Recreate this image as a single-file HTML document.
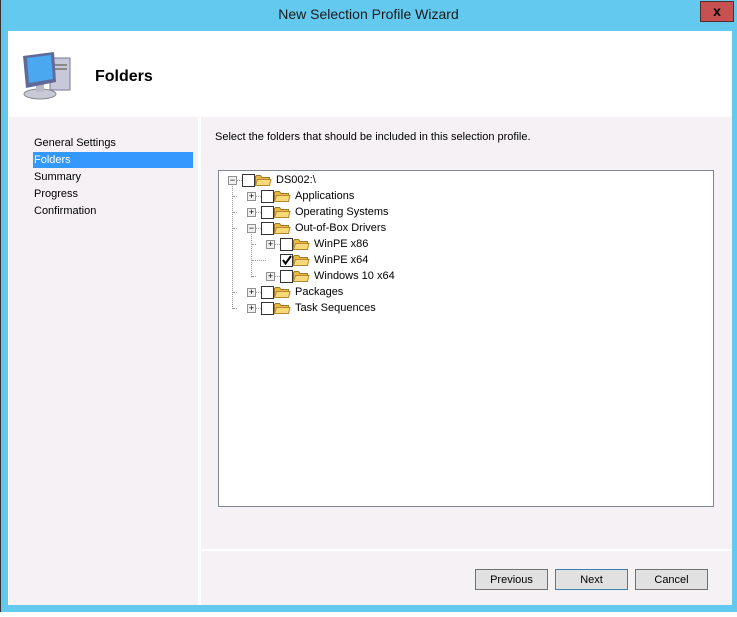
<!DOCTYPE html>
<html><head><style>
*{margin:0;padding:0;box-sizing:border-box}
body{width:737px;height:617px;background:#fff;position:relative;overflow:hidden;font-family:"Liberation Sans",sans-serif;font-size:11px;color:#000}
.a{position:absolute}
.frame{left:0;top:0;width:737px;height:612px;background:#63c9ef;border-left:1px solid #333}
.t{left:0;top:6px;width:737px;text-align:center;font-size:14px;color:#1a1a1a}
.close{left:700px;top:1px;width:34px;height:21px;background:#c75050;border:1px solid #5a2a2a;color:#000;font-weight:bold;font-size:14px;text-align:center;line-height:18px}
.client{left:8px;top:31px;width:724px;height:574px;background:#fff}
.left{left:9px;top:117px;width:189px;height:488px;background:#f5f1f5}
.right{left:201px;top:117px;width:531px;height:432px;background:#f5f1f5}
.bot{left:201px;top:551px;width:531px;height:54px;background:#f5f1f5}
.nav{left:34px;font-size:11px}
.sel{left:33px;top:152px;width:160px;height:16px;background:#3399ff}
.tree{left:218px;top:170px;width:496px;height:337px;background:#fff;border:1px solid #828790}
.btn{top:569px;width:73px;height:21px;background:#e1e1e1;border:1px solid #707070;text-align:center;line-height:20px;font-size:11px}
.ex{width:9px;height:9px;border:1px solid #919191;background:#f0f0f0;font-size:9px;line-height:7px;text-align:center;color:#000}
.cb{width:13px;height:13px;border:1px solid #333;background:#fff}
.tx{font-size:11px}
.dv{border-left:1px dotted #999;width:0}
.dh{border-top:1px dotted #999;height:0}
</style></head><body>
<div class="a frame"></div>
<div class="a t">New Selection Profile Wizard</div>
<div class="a close">x</div>
<div class="a client"></div>
<svg class="a" style="left:20px;top:50px" width="54" height="52" viewBox="0 0 54 52">
<rect x="30" y="8" width="20" height="32" fill="#c8c8d8" stroke="#7a7a9a"/>
<rect x="33" y="14" width="14" height="2" fill="#888"/><rect x="33" y="18" width="14" height="2" fill="#888"/>
<ellipse cx="20" cy="44" rx="16" ry="5" fill="#c8cad8" stroke="#888"/>
<rect x="16" y="34" width="8" height="8" fill="#b8bac8"/>
<path d="M3 6 L34 2 L36 32 L6 38 Z" fill="#606a9a"/>
<path d="M7 8 L31 5 L33 29 L9 33 Z" fill="#4aa8f0"/>
</svg>
<div class="a" style="left:95px;top:68px;font-size:16px;font-weight:bold">Folders</div>
<div class="a left"></div>
<div class="a right"></div>
<div class="a bot"></div>
<div class="a sel"></div>
<div class="a nav" style="top:137px">General Settings</div>
<div class="a nav" style="top:154px;color:#fff">Folders</div>
<div class="a nav" style="top:171px">Summary</div>
<div class="a nav" style="top:188px">Progress</div>
<div class="a nav" style="top:205px">Confirmation</div>
<div class="a" style="left:215px;top:131px">Select the folders that should be included in this selection profile.</div>
<div class="a tree"></div>
<svg width="0" height="0" style="position:absolute"><defs><g id="f"><path d="M0.5 2.5 L0.5 11.5 L14.5 11.5 L14.5 3.5 L7 3.5 L5.5 1.5 L1.5 1.5 Z" fill="#e8b84a" stroke="#a07820"/><path d="M2.5 5.5 L16 5.5 L14.5 11.5 L0.5 11.5 Z" fill="#f8d878" stroke="#b08830"/></g></defs></svg>
<div class="a dv" style="left:232px;top:186px;height:123px"></div>
<div class="a dv" style="left:251px;top:234px;height:43px"></div>
<div class="a dh" style="left:237px;top:180px;width:5px"></div>
<div id="rows"></div>
<script>
var rows=[[0,"DS002:\\",'-',0],[1,"Applications",'+',0],[1,"Operating Systems",'+',0],[1,"Out-of-Box Drivers",'-',0],[2,"WinPE x86",'+',0],[2,"WinPE x64",'',1],[2,"Windows 10 x64",'+',0],[1,"Packages",'+',0],[1,"Task Sequences",'+',0]];
var h='';
rows.forEach(function(r,i){var y=180+i*16;var b=228+r[0]*19;
if(r[0]>0)h+='<div class="a dh" style="left:'+(b-14)+'px;top:'+y+'px;width:'+(r[2]?4:14)+'px"></div>';
if(r[2])h+='<div class="a ex" style="left:'+b+'px;top:'+(y-4)+'px">'+(r[2]=='+'?'+':'&minus;')+'</div><div class="a dh" style="left:'+(b+9)+'px;top:'+y+'px;width:5px"></div>';
h+='<div class="a cb" style="left:'+(b+14)+'px;top:'+(y-6)+'px">'+(r[3]?'<svg width="11" height="11"><path d="M2 5 L4.5 8.5 L10 1" stroke="#000" stroke-width="2" fill="none"/></svg>':'')+'</div>';
h+='<svg class="a" style="left:'+(b+27)+'px;top:'+(y-6)+'px" width="17" height="13"><use href="#f"/></svg>';
h+='<div class="a tx" style="left:'+(b+48)+'px;top:'+(y-6)+'px">'+r[1]+'</div>';});
document.getElementById('rows').innerHTML=h;
</script>
<div class="a btn" style="left:475px">Previous</div>
<div class="a btn" style="left:555px;border-color:#3c7fb1">Next</div>
<div class="a btn" style="left:635px">Cancel</div>
</body></html>
